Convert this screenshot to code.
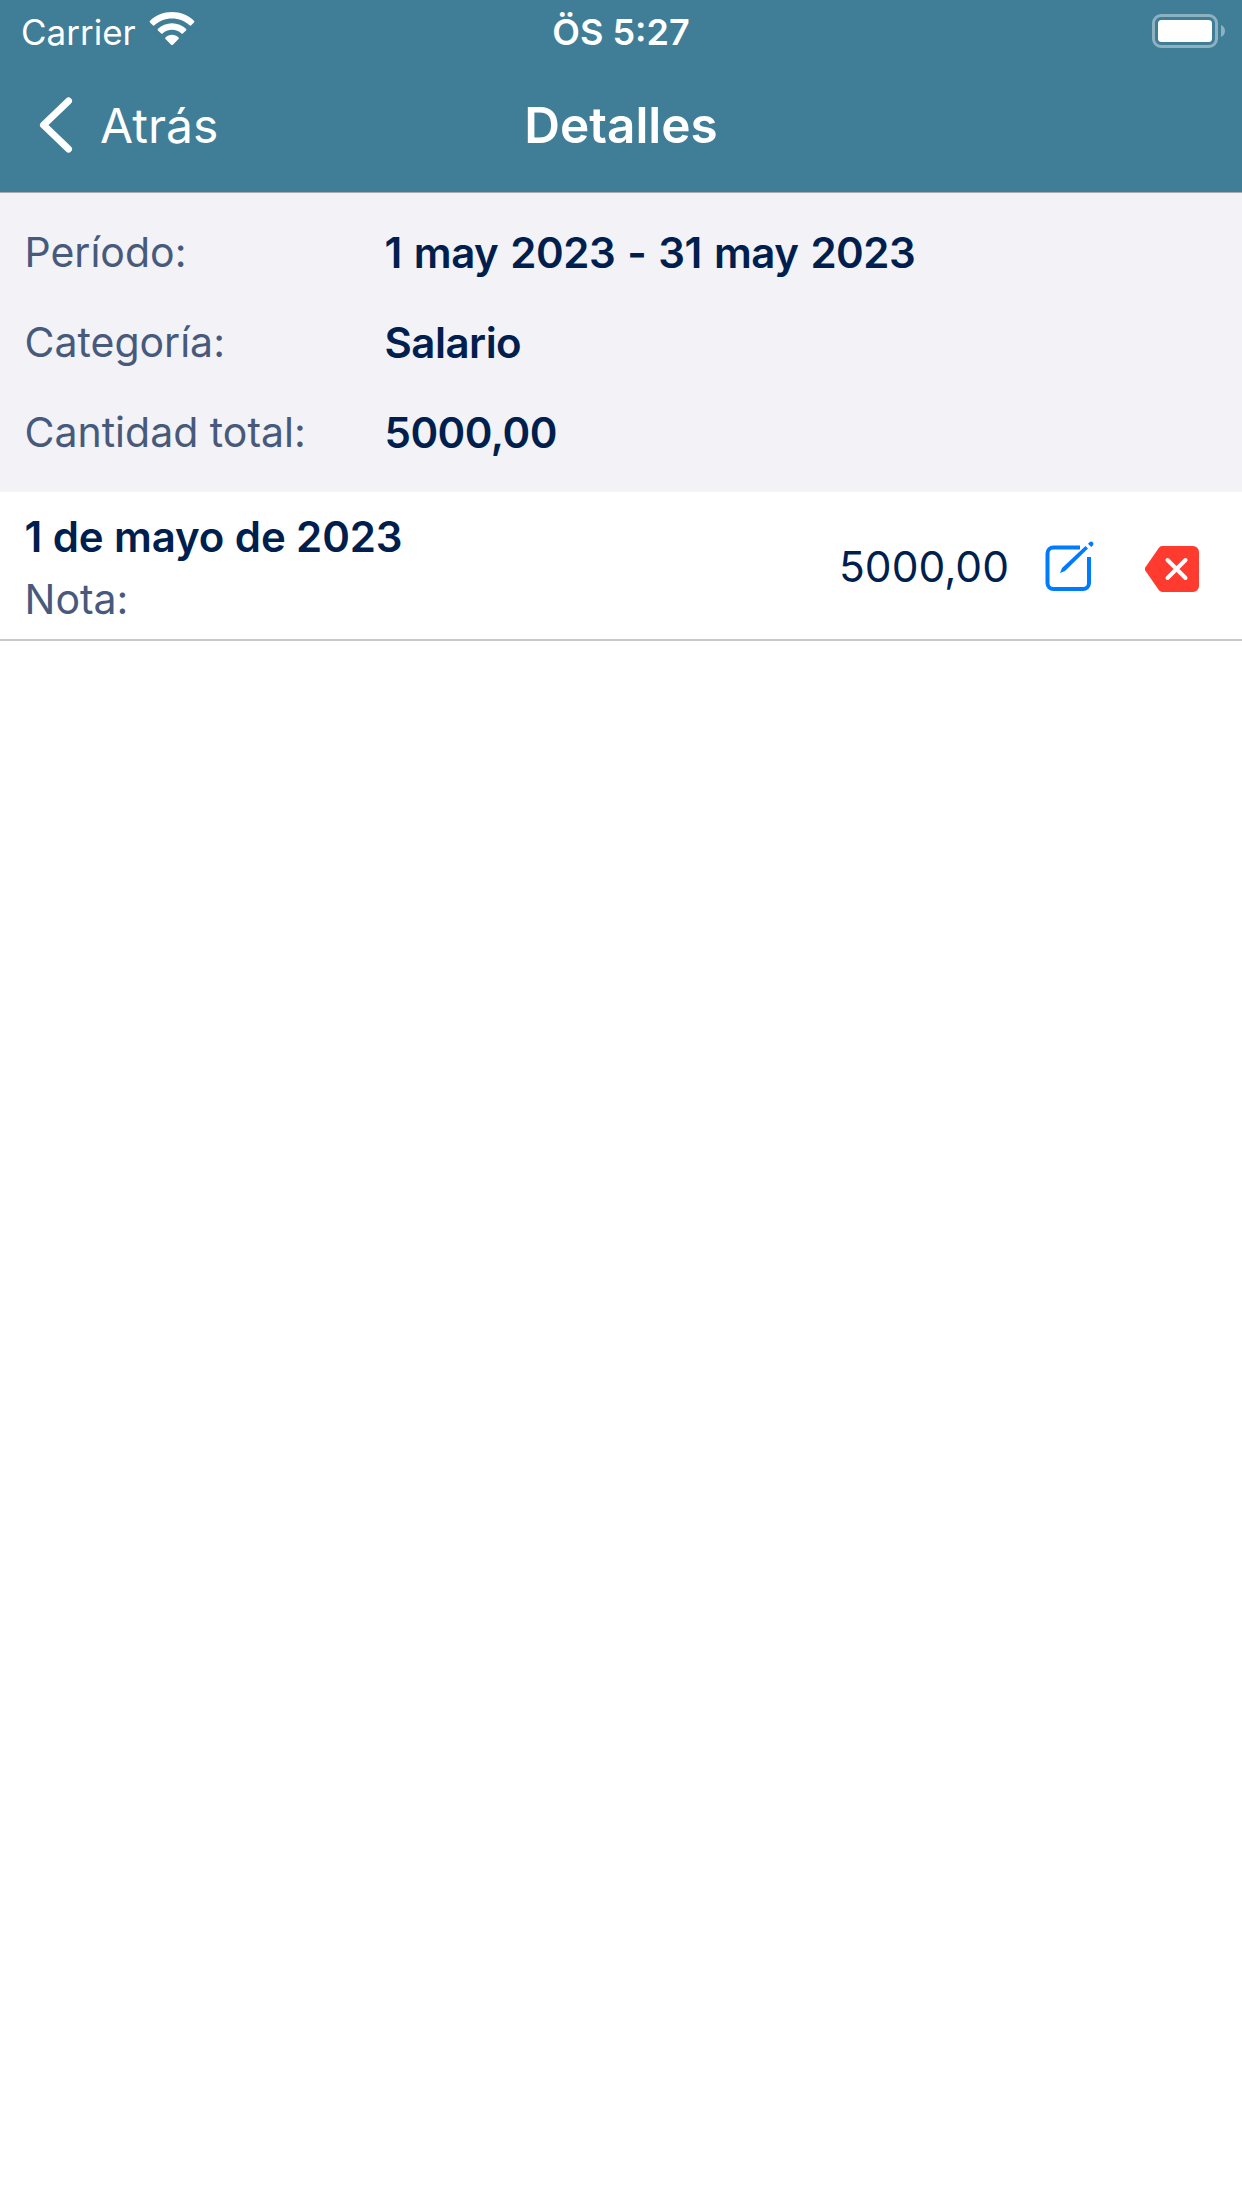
<div class="page">
  <header class="header">
    <div class="status">
      <div class="status-left">
        <span class="carrier">Carrier</span>
        <svg class="wifi" viewBox="0 0 46 34" width="46" height="34"><path fill="#fff" d="M23 0C14.500 0 6.800 3.300 1 8.700c-.5.500-.5 1.200 0 1.700l2.800 2.900c.5.500 1.200.5 1.700 0C10.100 9 16.200 6.400 23 6.400s12.900 2.600 17.500 6.900c.5.500 1.200.5 1.700 0l2.800-2.900c.5-.5.500-1.200 0-1.700C39.200 3.300 31.500 0 23 0Z"/><path fill="#fff" d="M23 11.200c-5.400 0-10.300 2.100-14 5.500-.5.500-.5 1.200 0 1.700l2.900 2.900c.4.500 1.200.500 1.700.100 2.500-2.200 5.800-3.600 9.400-3.600s6.900 1.400 9.400 3.600c.5.400 1.300.400 1.700-.100l2.900-2.900c.5-.5.500-1.200 0-1.700-3.700-3.400-8.600-5.500-14-5.500Z"/><path fill="#fff" d="M23 22.800c-2.500 0-4.800 1-6.500 2.600-.5.400-.5 1.200 0 1.600l5.600 5.700c.5.500 1.300.500 1.800 0l5.600-5.700c.5-.4.500-1.200 0-1.600-1.700-1.600-4-2.600-6.500-2.600Z"/></svg>
      </div>
      <span class="clock">ÖS 5:27</span>
      <svg class="battery" viewBox="0 0 74 34" width="74" height="34"><rect x="1.500" y="1.500" width="63" height="31" rx="7.500" fill="none" stroke="#fff" stroke-opacity=".4" stroke-width="3"/><rect x="6" y="6" width="54" height="22" rx="3.500" fill="#fff"/><path d="M69 11c2.500.8 4 3.300 4 6s-1.500 5.200-4 6Z" fill="#fff" fill-opacity=".4"/></svg>
    </div>
    <div class="nav">
      <div class="back">
        <svg viewBox="0 0 36 58" width="36" height="58"><path d="M30.500 5 5.500 29l25 24" fill="none" stroke="#fff" stroke-width="7" stroke-linecap="round" stroke-linejoin="round"/></svg>
        <span class="back-text">Atrás</span>
      </div>
      <h1>Detalles</h1>
    </div>
  </header>

  <section class="summary">
    <div class="sum-row"><span class="label">Período:</span><span class="value">1 may 2023 - 31 may 2023</span></div>
    <div class="sum-row"><span class="label">Categoría:</span><span class="value">Salario</span></div>
    <div class="sum-row"><span class="label">Cantidad total:</span><span class="value">5000,00</span></div>
  </section>

  <section class="entry">
    <div class="entry-text">
      <div class="entry-date">1 de mayo de 2023</div>
      <div class="entry-note">Nota:</div>
    </div>
    <span class="amount">5000,00</span>
    <svg class="edit" viewBox="0 0 52 52" width="52" height="52"><path d="M36 6.500H9.500a6 6 0 0 0-6 6V42a6 6 0 0 0 6 6H39a6 6 0 0 0 6-6V16" fill="none" stroke="#007aff" stroke-width="4"/><path d="M16 32l2-5L41.500 5l2.500 2.500L21 30Z" fill="#007aff"/><path d="M45.500 1.200c1-1 2.200-1 3.200 0s1 2.200 0 3.200l-1.500 1.500-3.200-3.200Z" fill="#007aff"/></svg>
    <svg class="del" viewBox="0 0 54 46" width="54" height="46"><path d="M17.500 0H48a6 6 0 0 1 6 6v34a6 6 0 0 1-6 6H17.500a5 5 0 0 1-3.400-1.400L1.300 26a4 4 0 0 1 0-6L14.100 1.400A5 5 0 0 1 17.500 0Z" fill="#ff3b30"/><path d="M22.500 14l18 18M40.500 14l-18 18" stroke="#fff" stroke-width="4" stroke-linecap="round"/></svg>
  </section>
</div>

<style>
  :global(body) { margin: 0; background: #fff; }
  .page { width: 1242px; height: 2208px; background: #fff; font-family: Inter, "Noto Sans", sans-serif; }
  .header { background: #407d97; height: 192px; border-bottom: 1px solid #a9a9ae; color: #fff; }
  .status { display: grid; grid-template-columns: 1fr auto 1fr; align-items: center; height: 60px; padding: 2px 16px 0; box-sizing: border-box; }
  .status-left { display: flex; align-items: center; gap: 13px; padding-left: 5px; }
  .carrier { font-size: 35px; line-height: 60px; }
  .wifi { margin-top: -6px; }
  .clock { font-size: 36px; font-weight: 600; line-height: 60px; }
  .battery { justify-self: end; margin-top: -2px; }
  .nav { position: relative; height: 132px; display: flex; align-items: center; justify-content: center; }
  .back { position: absolute; left: 38px; top: 34px; display: flex; align-items: center; gap: 26px; font-size: 48px; }
  .back-text { padding-top: 2px; }
  .nav h1 { margin: -3px 0 0; font-size: 49.500px; font-weight: 600; }
  .summary { background: #f2f2f7; height: 299px; padding-top: 14px; box-sizing: border-box; }
  .sum-row { display: flex; align-items: center; height: 90px; padding-left: 24.500px; font-size: 41px; }
  .label { width: 360px; color: #475a7c; flex: none; }
  .value { color: #001f4e; font-weight: 600; font-size: 42px; letter-spacing: -.5px; word-spacing: 2px; }
  .entry { display: flex; align-items: center; height: 149px; padding: 4px 0 0 24.500px; border-bottom: 2px solid #c8c8c8; box-sizing: border-box; }
  .entry-text { flex: 1; }
  .entry-date { font-size: 42px; font-weight: 600; letter-spacing: -.1px; color: #001f4e; line-height: 62px; padding-top: 1px; }
  .entry-note { font-size: 41px; color: #475a7c; line-height: 62px; }
  .amount { font-size: 42.500px; color: #001f4e; margin-top: -2px; }
  .edit { margin-left: 35px; margin-top: -2px; margin-right: 1px; }
  .del { margin: 2px 43px 0 48px; }
</style>
